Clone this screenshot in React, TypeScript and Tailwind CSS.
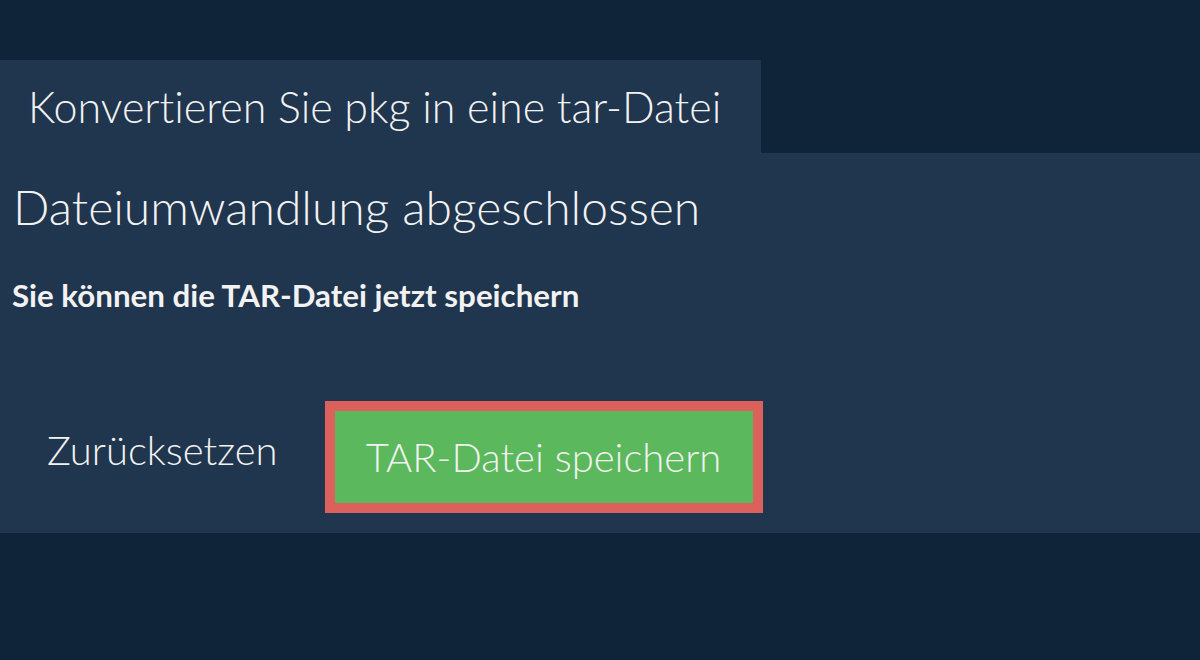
const App = () => {
  return (
    <div className="min-h-[660px] w-full bg-[#0f2439] pt-[60px] font-['Lato','Liberation_Sans',sans-serif] text-[#f2f2f2] [font-variant-ligatures:none]">
      {/* Tab */}
      <div className="flex h-[93px] w-[761px] items-center bg-[#20354e] pl-[28px]">
        <h1 className="text-[43px] font-light leading-none">Konvertieren Sie pkg in eine tar-Datei</h1>
      </div>

      {/* Panel */}
      <div className="h-[380px] w-full bg-[#20354e] px-[12px] pt-[28px]">
        <h2 className="pl-[1px] text-[48px] font-light leading-[52px]">Dateiumwandlung abgeschlossen</h2>
        <p className="mt-[47px] text-[31.3px] font-bold leading-[30px]">Sie können die TAR-Datei jetzt speichern</p>
        <div className="mt-[91px] flex items-center gap-[47px] pl-[35px]">
          <button className="mb-[14px] text-[40px] font-light leading-none">Zurücksetzen</button>
          <button className="flex h-[112px] w-[438px] items-center justify-center border-[10px] border-[#dc605c] bg-[#5cb85c] text-[40px] font-light leading-none">
            TAR-Datei speichern
          </button>
        </div>
      </div>
    </div>
  );
};

export default App;
